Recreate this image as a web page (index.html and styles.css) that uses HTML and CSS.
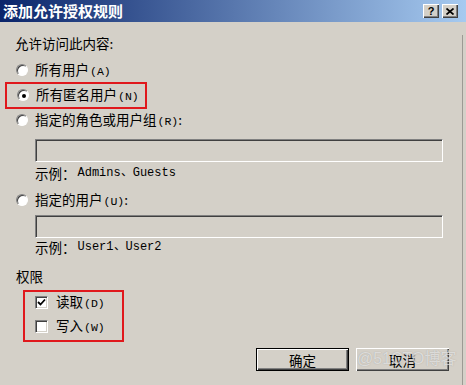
FILE: index.html
```html
<!DOCTYPE html>
<html lang="zh-CN">

<head>
    <meta charset="UTF-8">
    <title>添加允许授权规则</title>
    <link rel="stylesheet" href="styles.css">
</head>

<body>
    <div class="dialog">
        <div class="titlebar">
            <span class="title">添加允许授权规则</span>
            <div class="title-buttons">
                <span class="tbtn help">?</span>
                <span class="tbtn">
                    <svg width="8" height="7" viewBox="0 0 8 7">
                        <path d="M0.5 0.5 L7.5 6.5 M7.5 0.5 L0.5 6.5" stroke="#000" stroke-width="1.7" />
                    </svg>
                </span>
            </div>
        </div>

        <div class="content">
            <div class="row section">允许访问此内容:</div>

            <div class="row option first">
                <span class="radio"></span>
                <span>所有用户<span class="key">(A)</span></span>
            </div>

            <!-- 红框标注 -->
            <div class="mark mark-anon">
                <div class="row option">
                    <span class="radio checked"></span>
                    <span>所有匿名用户<span class="key">(N)</span></span>
                </div>
            </div>

            <div class="row option roles">
                <span class="radio"></span>
                <span>指定的角色或用户组<span class="key">(R)</span>:</span>
            </div>
            <div class="field field-roles"></div>
            <div class="row hint">示例：<span class="mono">Admins、Guests</span></div>

            <div class="row option users">
                <span class="radio"></span>
                <span>指定的用户<span class="key">(U)</span>:</span>
            </div>
            <div class="field field-users"></div>
            <div class="row hint hint-users">示例：<span class="mono">User1、User2</span></div>

            <div class="row section perms">权限</div>

            <div class="mark mark-perms">
                <div class="row check">
                    <span class="checkbox">
                        <svg width="9" height="9" viewBox="0 0 9 9">
                            <path d="M1 4 L3.5 6.5 L8 1.5" fill="none" stroke="#000" stroke-width="1.8" />
                        </svg>
                    </span>
                    <span>读取<span class="key">(D)</span></span>
                </div>
                <div class="row check second">
                    <span class="checkbox"></span>
                    <span>写入<span class="key">(W)</span></span>
                </div>
            </div>

            <div class="buttons">
                <button class="btn default">确定</button>
                <button class="btn">取消</button>
            </div>
        </div>

        <span class="watermark">@51CTO博客</span>
    </div>
</body>

</html>
```

FILE: styles.css
```css
body {
    margin: 0;
    background-color: #d4d0c8;
    font-family: "Noto Sans CJK SC", "Liberation Sans", sans-serif;
    font-size: 13.5px;
    color: #000;
}

.dialog {
    position: relative;
    width: 466px;
    height: 385px;
    background-color: #d4d0c8;
    overflow: hidden;
}

/* 标题栏 */
.titlebar {
    height: 22px;
    display: flex;
    align-items: center;
    justify-content: space-between;
    padding-left: 3px;
    background: linear-gradient(to right, #0a246a, #a6caf0);
}

.title {
    color: #fff;
    font-size: 15px;
    font-weight: bold;
    line-height: 22px;
}

.title-buttons {
    display: flex;
    gap: 3px;
    margin-right: 8px;
}

.tbtn {
    width: 16px;
    height: 14px;
    box-sizing: border-box;
    display: flex;
    align-items: center;
    justify-content: center;
    background-color: #d4d0c8;
    box-shadow: inset 1px 1px #fff, inset -1px -1px #404040, inset -2px -2px #808080;
}

.help {
    font-family: "Liberation Sans", sans-serif;
    font-size: 11px;
    font-weight: bold;
    line-height: 14px;
}

/* 内容区 */
.content {
    width: 447px;
    height: 363px;
    padding-left: 15px;
    border-right: 1px solid #9c9a94;
}

.row {
    display: flex;
    align-items: center;
    height: 16px;
    line-height: 16px;
    white-space: nowrap;
}

.key {
    font-family: "Liberation Mono", monospace;
    font-size: 11.5px;
    margin-left: 1px;
}

.mono {
    font-family: "Liberation Mono", monospace;
    font-size: 12px;
    margin-left: 2px;
}

.section {
    margin-top: 13px;
}

.option {
    gap: 7px;
    margin-left: 1px;
}

.option.first {
    margin-top: 11px;
}

.radio {
    width: 12px;
    height: 12px;
    box-sizing: border-box;
    border-radius: 50%;
    background-color: #fff;
    border: 1px solid;
    border-color: #808080 #fff #fff #808080;
    box-shadow: inset 1px 1px #404040;
    display: flex;
    align-items: center;
    justify-content: center;
}

.radio.checked::after {
    content: "";
    width: 4px;
    height: 4px;
    margin: 1px 0 0 1px;
    border-radius: 50%;
    background-color: #000;
}

/* 红色标注框 */
.mark {
    border: 2px solid #e0181c;
    box-sizing: border-box;
}

.mark-anon {
    width: 142px;
    height: 27px;
    margin: 4px 0 0 -10px;
    padding: 3px 0 0 9px;
}

.option.roles {
    margin-top: 3px;
}

.option.users {
    margin-top: 11px;
}

.field {
    width: 408px;
    height: 23px;
    box-sizing: border-box;
    margin-left: 20px;
    border: 1px solid;
    border-color: #808080 #fff #fff #808080;
    box-shadow: inset 1px 1px #404040, inset -1px -1px #d4d0c8;
    background-color: #d4d0c8;
}

.field-roles {
    margin-top: 11px;
}

.field-users {
    margin-top: 7px;
}

.hint {
    margin: 3px 0 0 20px;
}

.hint-users {
    margin-top: 1px;
}

.perms {
    margin-top: 13px;
    margin-left: 1px;
}

.mark-perms {
    width: 101px;
    height: 52px;
    margin: 6px 0 0 8px;
    padding: 2px 0 0 10px;
}

.check {
    gap: 8px;
}

.check.second {
    margin-top: 8px;
}

.checkbox {
    width: 13px;
    height: 13px;
    box-sizing: border-box;
    background-color: #fff;
    border: 1px solid;
    border-color: #808080 #fff #fff #808080;
    box-shadow: inset 1px 1px #404040, inset -1px -1px #d4d0c8;
    display: flex;
    align-items: center;
    justify-content: center;
}

/* 按钮 */
.buttons {
    display: flex;
    justify-content: flex-end;
    gap: 7px;
    margin: 6px 13px 0 0;
}

.btn {
    width: 93px;
    height: 23px;
    padding: 0;
    font-family: inherit;
    font-size: 13.5px;
    color: #000;
    background-color: #d4d0c8;
    border: none;
    box-shadow: inset 1px 1px #fff, inset -1px -1px #404040, inset -2px -2px #808080;
}

.btn.default {
    border: 1px solid #000;
}

.watermark {
    position: absolute;
    left: 357px;
    top: 349px;
    font-family: "Liberation Sans", "Noto Sans CJK SC", sans-serif;
    font-size: 16px;
    line-height: 20px;
    color: rgba(255, 255, 255, 0.6);
    text-shadow: 0 0 1px rgba(110, 110, 110, 0.5);
    pointer-events: none;
}
```
